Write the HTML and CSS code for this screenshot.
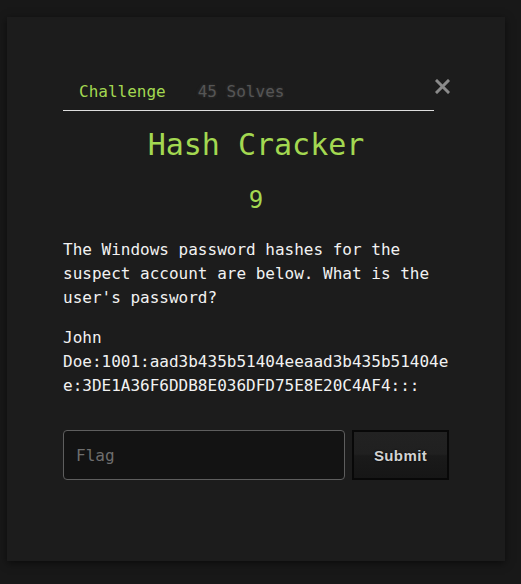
FILE: index.html
```html
<!DOCTYPE html>
<html>
<head>
<meta charset="utf-8">
<link rel="stylesheet" href="styles.css">
</head>
<body>
<div class="modal">
  <div class="tabrow">
    <nav class="tabs">
      <span class="tab active">Challenge</span>
      <span class="tab muted">45 Solves</span>
    </nav>
    <button class="close" aria-label="Close">
      <svg width="15" height="15" viewBox="0 0 15 15"><path d="M2 2 L13 13 M13 2 L2 13" stroke="#8a8a8a" stroke-width="3" stroke-linecap="square"/></svg>
    </button>
  </div>
  <h1 class="title">Hash Cracker</h1>
  <div class="points">9</div>
  <p class="desc">The Windows password hashes for the suspect account are below. What is the user's password?</p>
  <p class="desc hash">John Doe:1001:aad3b435b51404eeaad3b435b51404ee:3DE1A36F6DDB8E036DFD75E8E20C4AF4:::</p>
  <form class="flagrow">
    <input class="flag" type="text" placeholder="Flag">
    <button class="submit" type="button">Submit</button>
  </form>
</div>
</body>
</html>
```
FILE: styles.css
```css
html, body {
  margin: 0;
  padding: 0;
  background: #181818;
  height: 100%;
}
body {
  font-family: "DejaVu Sans Mono", monospace;
  font-size: 16px;
  line-height: 24px;
  color: #f2f2f2;
  padding-top: 17px;
  box-sizing: border-box;
}
.modal {
  margin-left: 7px;
  width: 498px;
  height: 544px;
  box-sizing: border-box;
  background: #1c1c1c;
  box-shadow: 0 2px 8px rgba(0,0,0,0.55);
  padding: 53px 56px 0 56px;
}
.tabrow {
  display: flex;
  align-items: flex-start;
  width: 394px;
}
.tabs {
  flex: 0 0 371px;
  display: flex;
  border-bottom: 1px solid #dddddd;
}
.tab {
  padding: 10px 16px 6px 16px;
  line-height: 24px;
}
.active {
  color: #a3d851;
}
.muted {
  color: #555555;
  text-shadow: 0 0 3px #3a3a3a;
}
.close {
  margin: 9px 0 0 1px;
  padding: 0;
  background: none;
  border: 0;
  width: 15px;
  height: 15px;
  display: flex;
}
.title {
  margin: 16px 0 0 0;
  font-size: 30px;
  line-height: 36px;
  font-weight: normal;
  color: #a3d851;
  text-align: center;
  width: 386px;
}
.points {
  margin-top: 22px;
  font-size: 24px;
  line-height: 30px;
  color: #a3d851;
  text-align: center;
  width: 386px;
}
.desc {
  margin: 23px 0 0 0;
  width: 386px;
  overflow-wrap: break-word;
}
.hash {
  margin-top: 16px;
}
.flagrow {
  margin-top: 32px;
  display: flex;
  gap: 7px;
  width: 386px;
}
.flag {
  width: 282px;
  height: 50px;
  box-sizing: border-box;
  background: #131313;
  border: 1px solid #5e5e5e;
  border-radius: 4px;
  padding: 0 12px;
  font-family: "DejaVu Sans Mono", monospace;
  font-size: 16px;
  color: #eeeeee;
  outline: none;
}
.flag::placeholder {
  color: #6e6e6e;
}
.submit {
  width: 97px;
  height: 50px;
  box-sizing: border-box;
  border: 2px solid #080808;
  background: linear-gradient(#222222 0%, #202020 48%, #1a1a1a 52%, #161616 100%);
  font-family: "Liberation Sans", Arial, sans-serif;
  font-weight: bold;
  font-size: 15px;
  color: #d2d2d2;
  letter-spacing: 0.4px;
  text-shadow: 0 0 2px #000;
  padding: 0;
}
```
